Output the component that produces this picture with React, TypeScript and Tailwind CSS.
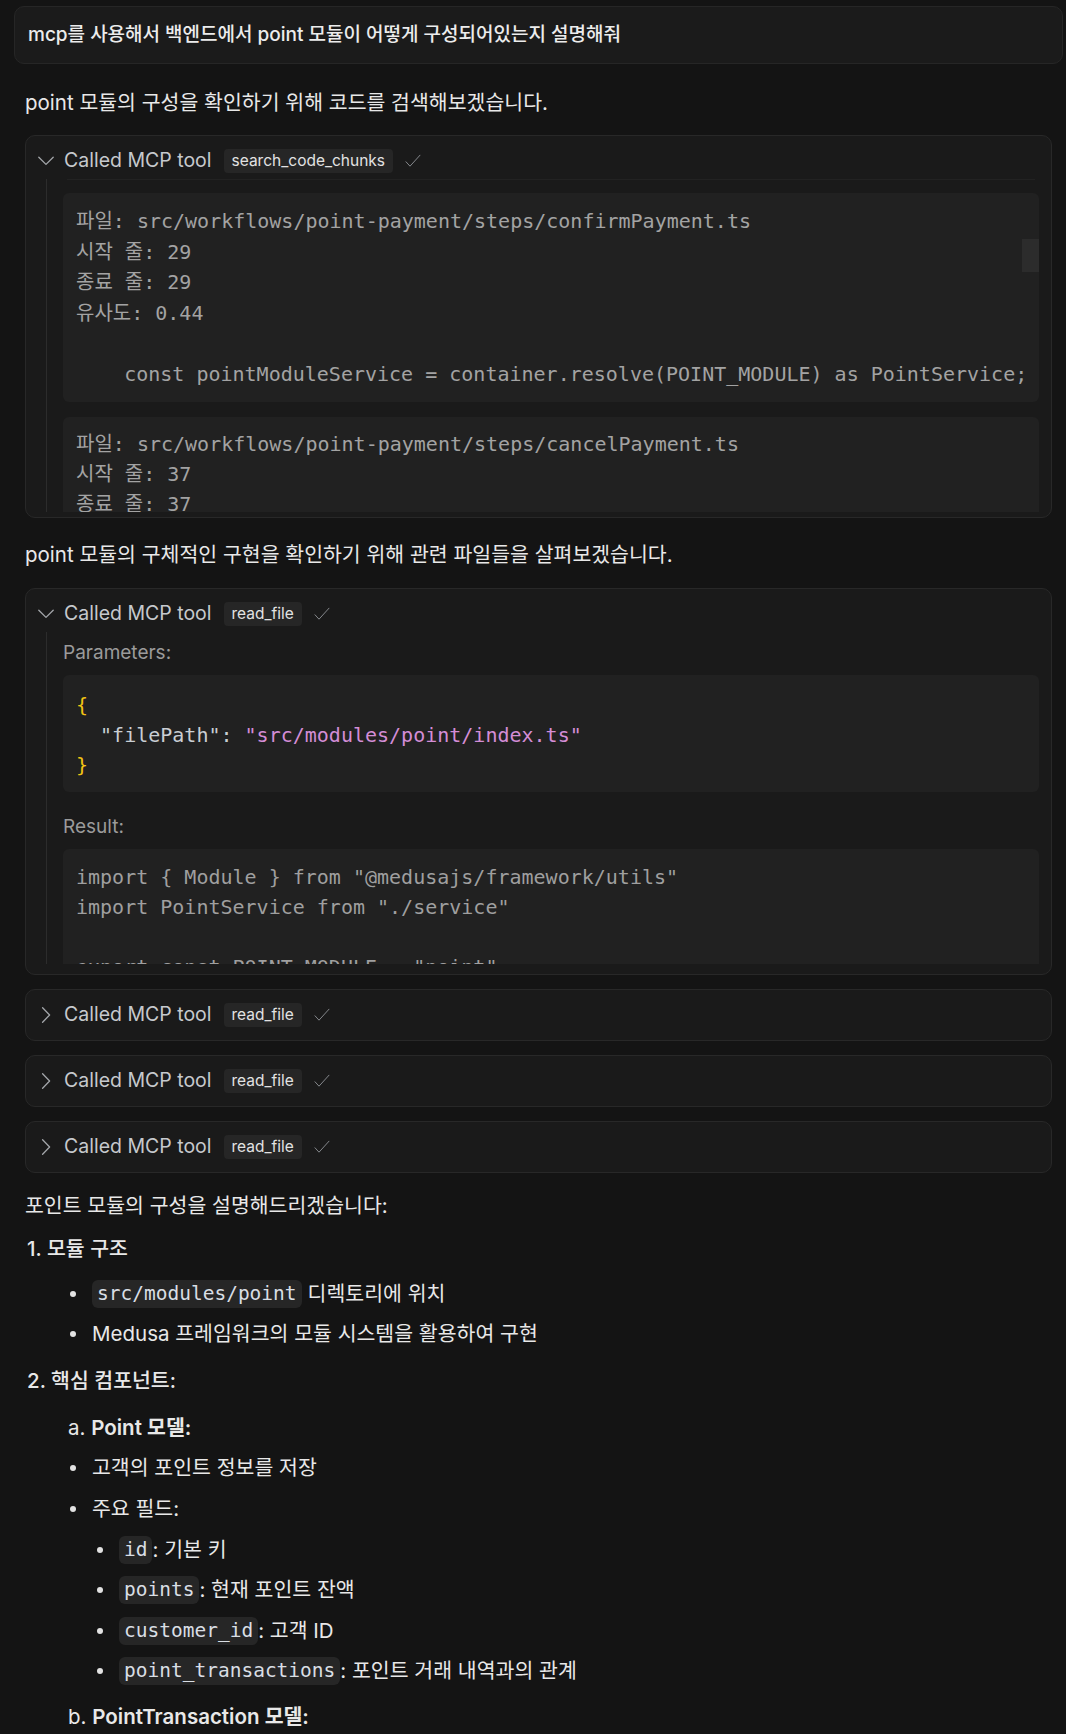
import React from "react";

function Chevron({ open }: { open: boolean }) {
  return (
    <svg width="16" height="16" viewBox="0 0 16 16" fill="none" stroke="#a3a6aa" strokeWidth="1.3" strokeLinecap="round" strokeLinejoin="round">
      {open ? <path d="M0.8 4.2 L8 11.4 L15.2 4.2" /> : <path d="M4.6 0.8 L11.6 8 L4.6 15.2" />}
    </svg>
  );
}

function Check() {
  return (
    <svg width="16" height="14" viewBox="0 0 16 14" fill="none" stroke="#85888c" strokeWidth="1" strokeLinecap="round" strokeLinejoin="round">
      <path d="M1 7.8 L5 12.2 L15 1.2" />
    </svg>
  );
}

function Header({ open, tool }: { open: boolean; tool: string }) {
  return (
    <div className="flex items-center h-[28px] pl-[12px]">
      <Chevron open={open} />
      <span className="ml-[10px] text-[19.5px] text-[#c6c9cd]">Called MCP tool</span>
      <span className="ml-[12px] h-[24px] px-[8px] flex items-center rounded-[4px] bg-[#262626] text-[15.5px] text-[#e2e2e2]">{tool}</span>
      <span className="ml-[12px] flex items-center">
        <Check />
      </span>
    </div>
  );
}

const mono = "font-['DejaVu_Sans_Mono','Noto_Sans_CJK_KR',monospace]";

function Code({ children }: { children: React.ReactNode }) {
  return (
    <span className={`${mono} inline-flex items-center h-[28px] px-[5px] rounded-[6px] bg-[#262626] text-[19.5px] text-[#d9dee4]`}>
      {children}
    </span>
  );
}

function Dot({ nested = false }: { nested?: boolean }) {
  return <span className={`${nested ? "ml-[72px]" : "ml-[45px]"} mr-[16px] w-[6px] h-[6px] rounded-full bg-[#e2e2e2] shrink-0`} />;
}

export default function App() {
  return (
    <div className="min-h-screen w-full bg-[#141414] pl-[14px] pr-[3px] pt-[6px] pb-10 font-['Inter','Noto_Sans_CJK_KR',sans-serif] text-[#e8e8e8]">
      <div className="h-[58px] rounded-[10px] border border-[#262626] bg-[#1b1b1b] pl-[13px] flex items-center text-[19px] font-medium text-[#ececec]">
        mcp를 사용해서 백엔드에서 point 모듈이 어떻게 구성되어있는지 설명해줘
      </div>

      <div className="px-[11px]">
        <p className="mt-[25px] text-[20.5px] leading-[28px]">point 모듈의 구성을 확인하기 위해 코드를 검색해보겠습니다.</p>

        {/* search_code_chunks */}
        <div className="mt-[18px] rounded-[10px] border border-[#282828] bg-[#1a1a1a] pt-[11px] pb-[5px]">
          <Header open tool="search_code_chunks" />
          <div className="mt-[4px] ml-[20px] mr-[12px] h-[333px] overflow-hidden border-l border-[#2c2c2c] pl-[16px]">
            <div className="mx-[4px] border-t border-[#222222]" />
            <div className={`relative mt-[13px] rounded-[6px] bg-[#212121] pl-[13px] pt-[13px] pb-[13px] ${mono} text-[20px] leading-[30.5px] text-[#a3a3a3] whitespace-pre`}>
              {"파일: src/workflows/point-payment/steps/confirmPayment.ts\n시작 줄: 29\n종료 줄: 29\n유사도: 0.44\n\n    const pointModuleService = container.resolve(POINT_MODULE) as PointService;"}
              <div className="absolute right-0 top-[46px] w-[17px] h-[33px] bg-[#2c2c2c]" />
            </div>
            <div className={`mt-[15px] rounded-[6px] bg-[#212121] pl-[13px] pt-[12px] pb-[15px] ${mono} text-[20px] leading-[30px] text-[#a3a3a3] whitespace-pre`}>
              {"파일: src/workflows/point-payment/steps/cancelPayment.ts\n시작 줄: 37\n종료 줄: 37\n유사도: 0.41"}
            </div>
          </div>
        </div>

        <p className="mt-[23px] text-[20.5px] leading-[28px]">point 모듈의 구체적인 구현을 확인하기 위해 관련 파일들을 살펴보겠습니다.</p>

        {/* read_file expanded */}
        <div className="mt-[19px] rounded-[10px] border border-[#282828] bg-[#1a1a1a] pt-[11px] pb-[10px]">
          <Header open tool="read_file" />
          <div className="mt-[4px] ml-[20px] mr-[12px] h-[332px] overflow-hidden border-l border-[#2c2c2c] pl-[16px]">
            <p className="pt-[8px] text-[19px] leading-[26px] text-[#9b9b9b]">Parameters:</p>
            <div className={`mt-[9px] rounded-[6px] bg-[#212121] pl-[13px] pt-[15px] pb-[12px] ${mono} text-[20px] leading-[30px] whitespace-pre`}>
              <div className="text-[#f2c414]">{"{"}</div>
              <div className="text-[#c9ced3]">
                {'  "filePath": '}
                <span className="text-[#d48dd6]">"src/modules/point/index.ts"</span>
              </div>
              <div className="text-[#f2c414]">{"}"}</div>
            </div>
            <p className="mt-[22px] text-[19px] leading-[26px] text-[#9b9b9b]">Result:</p>
            <div className={`mt-[9px] rounded-[6px] bg-[#212121] pl-[13px] pt-[13px] pb-[12px] ${mono} text-[20px] leading-[30px] text-[#9f9f9f] whitespace-pre`}>
              {'import { Module } from "@medusajs/framework/utils"\nimport PointService from "./service"\n\nexport const POINT_MODULE = "point"\n\nexport default Module(POINT_MODULE, {'}
            </div>
          </div>
        </div>

        {[0, 1, 2].map((i) => (
          <div key={i} className="mt-[14px] rounded-[10px] border border-[#282828] bg-[#1a1a1a] pt-[11px] pb-[11px]">
            <Header open={false} tool="read_file" />
          </div>
        ))}

        <div className="mt-[13px] text-[20.5px]">
          <div className="h-[40px] flex items-center">포인트 모듈의 구성을 설명해드리겠습니다:</div>
          <div className="mt-[3px] h-[40px] flex items-center pl-[2px] font-medium">1. 모듈 구조</div>
          <div className="mt-[5px] h-[40px] flex items-center">
            <Dot />
            <Code>src/modules/point</Code>
            <span className="ml-[6px]">디렉토리에 위치</span>
          </div>
          <div className="h-[40px] flex items-center">
            <Dot />
            Medusa 프레임워크의 모듈 시스템을 활용하여 구현
          </div>
          <div className="mt-[7px] h-[40px] flex items-center pl-[2px] font-medium">2. 핵심 컴포넌트:</div>
          <div className="mt-[7px] h-[40px] flex items-center pl-[43px]">
            a.&nbsp;<span className="font-semibold">Point 모델:</span>
          </div>
          <div className="h-[40px] flex items-center">
            <Dot />
            고객의 포인트 정보를 저장
          </div>
          <div className="mt-[1px] h-[40px] flex items-center">
            <Dot />
            주요 필드:
          </div>
          <div className="mt-[1px] h-[40px] flex items-center">
            <Dot nested />
            <Code>id</Code>: 기본 키
          </div>
          <div className="h-[40px] flex items-center">
            <Dot nested />
            <Code>points</Code>: 현재 포인트 잔액
          </div>
          <div className="mt-[1px] h-[40px] flex items-center">
            <Dot nested />
            <Code>customer_id</Code>: 고객 ID
          </div>
          <div className="h-[40px] flex items-center">
            <Dot nested />
            <Code>point_transactions</Code>: 포인트 거래 내역과의 관계
          </div>
          <div className="mt-[6px] h-[40px] flex items-center pl-[43px]">
            b.&nbsp;<span className="font-semibold">PointTransaction 모델:</span>
          </div>
        </div>
      </div>
    </div>
  );
}
